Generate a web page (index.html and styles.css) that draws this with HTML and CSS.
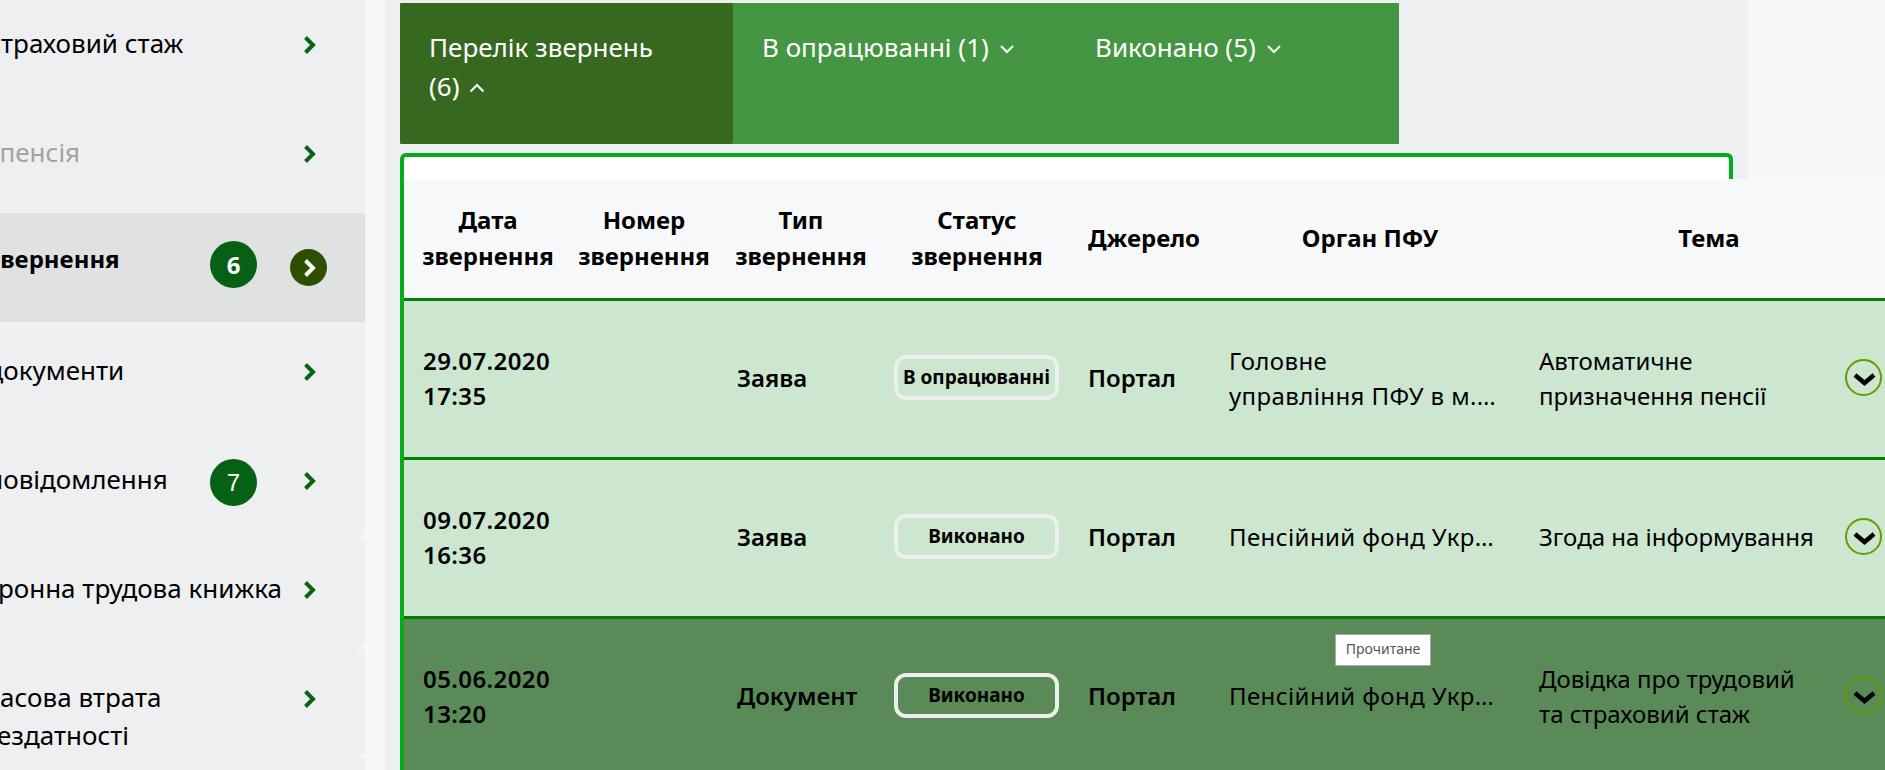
FILE: index.html
```html
<!DOCTYPE html>
<html lang="uk">
<head>
<meta charset="utf-8">
<title>Перелік звернень</title>
<link rel="stylesheet" href="styles.css">
</head>
<body>
<div class="page">
  <nav class="sidebar">
    <a class="item"><span class="label">Мій страховий стаж</span><svg class="chev" viewBox="0 0 14 20"><path d="M2.500 2.500l7.500 7.500-7.500 7.500"/></svg></a>
    <a class="item muted"><span class="label">Моя пенсія</span><svg class="chev" viewBox="0 0 14 20"><path d="M2.500 2.500l7.500 7.500-7.500 7.500"/></svg></a>
    <a class="item active"><span class="label">Мої звернення</span><span class="badge bold">6</span><span class="go"><svg viewBox="0 0 14 20"><path d="M2.500 2.500l7.500 7.500-7.500 7.500"/></svg></span></a>
    <a class="item"><span class="label">Мої документи</span><svg class="chev" viewBox="0 0 14 20"><path d="M2.500 2.500l7.500 7.500-7.500 7.500"/></svg></a>
    <a class="item round"><span class="label">Мої повідомлення</span><span class="badge">7</span><svg class="chev" viewBox="0 0 14 20"><path d="M2.500 2.500l7.500 7.500-7.500 7.500"/></svg></a>
    <a class="item round wide"><span class="label">Електронна трудова книжка</span><svg class="chev" viewBox="0 0 14 20"><path d="M2.500 2.500l7.500 7.500-7.500 7.500"/></svg></a>
    <a class="item round"><span class="label">Тимчасова втрата<br>працездатності</span><svg class="chev" viewBox="0 0 14 20"><path d="M2.500 2.500l7.500 7.500-7.500 7.500"/></svg></a>
    <a class="item"></a>
  </nav>
  <main class="panel">
    <div class="tabs">
      <div class="tab current">Перелік звернень<br>(6)<svg class="caret" viewBox="0 0 16 10"><path d="M1.5 8.5L8 2l6.500 6.500"/></svg></div>
      <div class="tab">В опрацюванні (1)<svg class="caret" viewBox="0 0 16 10"><path d="M2 2l6 6 6-6"/></svg></div>
      <div class="tab">Виконано (5)<svg class="caret" viewBox="0 0 16 10"><path d="M2 2l6 6 6-6"/></svg></div>
    </div>
    <section class="box">
      <div class="table">
        <div class="head">
          <div>Дата<br>звернення</div>
          <div>Номер<br>звернення</div>
          <div>Тип<br>звернення</div>
          <div>Статус<br>звернення</div>
          <div>Джерело</div>
          <div>Орган ПФУ</div>
          <div>Тема</div>
        </div>
        <div class="row">
          <div class="cell date">29.07.2020<br>17:35</div>
          <div class="cell"></div>
          <div class="cell strong">Заява</div>
          <div class="cell"><span class="status">В опрацюванні</span></div>
          <div class="cell strong">Портал</div>
          <div class="cell organ"><span class="clamp">Головне<br>управління ПФУ в м.…</span></div>
          <div class="cell">Автоматичне<br>призначення пенсії</div>
          <div class="cell"><svg class="toggle" viewBox="0 0 37 37"><circle cx="18.500" cy="18.500" r="17.500"/><path d="M10 16l9.500 8 9.500-8"/></svg></div>
        </div>
        <div class="row">
          <div class="cell date">09.07.2020<br>16:36</div>
          <div class="cell"></div>
          <div class="cell strong">Заява</div>
          <div class="cell"><span class="status">Виконано</span></div>
          <div class="cell strong">Портал</div>
          <div class="cell organ"><span class="clamp">Пенсійний фонд України</span></div>
          <div class="cell">Згода на інформування</div>
          <div class="cell"><svg class="toggle" viewBox="0 0 37 37"><circle cx="18.500" cy="18.500" r="17.500"/><path d="M10 16l9.500 8 9.500-8"/></svg></div>
        </div>
        <div class="row dark">
          <div class="cell date">05.06.2020<br>13:20</div>
          <div class="cell"></div>
          <div class="cell strong">Документ</div>
          <div class="cell"><span class="status">Виконано</span></div>
          <div class="cell strong">Портал</div>
          <div class="cell organ"><span class="tip">Прочитане</span><span class="clamp">Пенсійний фонд України</span></div>
          <div class="cell">Довідка про трудовий<br>та страховий стаж</div>
          <div class="cell"><svg class="toggle" viewBox="0 0 37 37"><circle cx="18.500" cy="18.500" r="17.500"/><path d="M10 16l9.500 8 9.500-8"/></svg></div>
        </div>
      </div>
    </section>
  </main>
</div>
</body>
</html>
```
FILE: styles.css
```css
* { box-sizing: border-box; }
html, body { margin: 0; height: 100%; overflow: hidden; }
body { font-family: "Noto Sans", sans-serif; color: #000; background: #f6f7f9; }
.page { display: flex; width: 1885px; height: 770px; overflow: hidden; gap: 20px; }

.sidebar { flex: 0 0 465px; margin-left: -100px; margin-top: -5px; display: flex; flex-direction: column; }
.item { flex: 0 0 109px; display: flex; align-items: flex-start; position: relative; background: #eeeff1; font-size: 26px; line-height: 38px; padding: 29px 0 0 35px; }
.item.round { border-bottom-right-radius: 10px; }
.item.wide { padding-left: 28px; }
.item.active { background: #e0e1e3; font-size: 24px; font-weight: 700; padding: 27px 0 0 37px; }
.item.muted { padding-left: 39px; }
.item.muted .label { color: #a3a3a3; }
.label { white-space: nowrap; }
.chev { position: absolute; left: 403px; top: 40px; width: 14px; height: 20px; }
.chev path, .go path { fill: none; stroke: #0a6312; stroke-width: 4; }
.badge { position: absolute; left: 310px; top: 28px; width: 47px; height: 47px; border-radius: 50%; background: #066114; color: #fff; display: flex; align-items: center; justify-content: center; font-family: "Liberation Sans", sans-serif; font-size: 24px; font-weight: 400; }
.badge.bold { font-family: "Noto Sans", sans-serif; font-weight: 700; }
.go { position: absolute; left: 390px; top: 36px; width: 37px; height: 37px; border-radius: 50%; background: #2f4f00; display: flex; align-items: center; justify-content: center; padding-left: 2px; }
.go svg { width: 14px; height: 20px; }
.go path { stroke: #fff; }

.panel { flex: 0 0 1363px; min-width: 0; background: #eeeff1; padding: 3px 15px 0 15px; }
.tabs { width: 999px; height: 141px; display: flex; background: #459642; }
.tab { flex: 0 0 333px; padding: 25px 28px 0 29px; color: #fff; font-size: 26px; line-height: 39px; }
.tab.current { background: #36691f; border-radius: 3px; }
.caret { width: 16px; height: 10px; margin-left: 10px; vertical-align: 3px; }
.caret path { fill: none; stroke: #fff; stroke-width: 2; }

.box { margin-top: 9px; height: 700px; min-width: 0; background: #fff; border: 4px solid #04ac1c; border-bottom: 0; border-radius: 6px 6px 0 0; padding-top: 22px; }
.table { width: 1500px; }
.head { height: 122px; display: grid; grid-template-columns: 168px 144px 170px 182px 152px 300px 378px; align-items: center; text-align: center; background: #f7f8fa; border-bottom: 3px solid #008000; padding-bottom: 2px; font-size: 24px; font-weight: 700; line-height: 36px; }
.row { height: 159px; display: grid; grid-template-columns: 159px 156px 157px 194px 140px 311px 314px 69px; align-items: center; background: #cde6d0; border-bottom: 3px solid #008000; padding-bottom: 3px; font-size: 24px; line-height: 35px; }
.row.dark { background: #5a8a57; }
.cell { padding-left: 18px; min-width: 0; position: relative; }
.date, .strong { font-weight: 600; }
.date { padding-left: 19px; letter-spacing: .4px; }
.status { display: flex; width: 165px; height: 45px; align-items: center; justify-content: center; border: 4px solid #eeeeee; border-radius: 12px; font-size: 19px; font-weight: 700; line-height: 1; white-space: nowrap; }
.organ { padding: 0 14px 0 19px; letter-spacing: .4px; }
.clamp { display: block; overflow: hidden; white-space: nowrap; text-overflow: ellipsis; }
.tip { position: absolute; left: 125px; top: -44px; width: 96px; height: 32px; background: #fff; border: 1px solid #aaa; color: #555; font-size: 14px; line-height: 28px; letter-spacing: 0; text-align: center; }
.toggle { display: block; width: 37px; height: 37px; margin-left: -8px; }
.toggle circle { fill: none; stroke: #5fa000; stroke-width: 2; }
.toggle path { fill: none; stroke: #000; stroke-width: 4.500; }
```
